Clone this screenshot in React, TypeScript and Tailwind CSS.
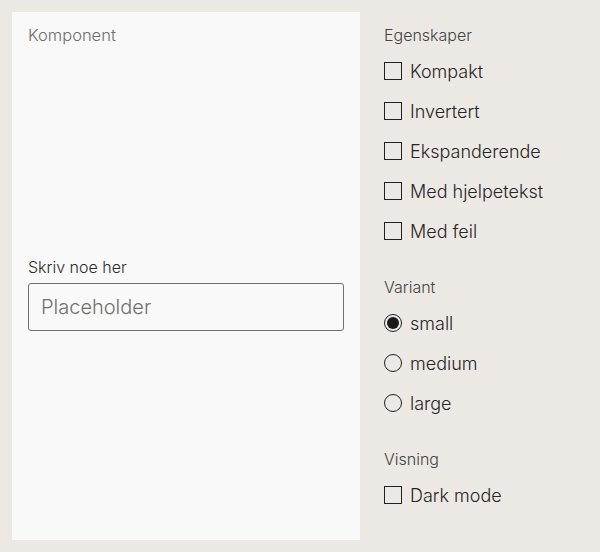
import { useState } from 'react';

const properties = ['Kompakt', 'Invertert', 'Ekspanderende', 'Med hjelpetekst', 'Med feil'];
const variants = ['small', 'medium', 'large'];

function Checkbox({ label }: { label: string }) {
  const [checked, setChecked] = useState(false);
  return (
    <label className="flex items-center h-10 cursor-pointer">
      <span
        onClick={() => setChecked(!checked)}
        className={`w-[18px] h-[18px] border border-[#222] ${checked ? 'bg-[#222]' : 'bg-transparent'}`}
      />
      <span className="ml-2 text-[18px] font-light text-[#262626]">{label}</span>
    </label>
  );
}

function Radio({ label, checked, onSelect }: { label: string; checked: boolean; onSelect: () => void }) {
  return (
    <label className="flex items-center h-10 cursor-pointer" onClick={onSelect}>
      <span className="w-[18px] h-[18px] rounded-full border border-[#222] flex items-center justify-center">
        {checked && <span className="w-3 h-3 rounded-full bg-[#1a1a1a]" />}
      </span>
      <span className="ml-2 text-[18px] font-light text-[#262626]">{label}</span>
    </label>
  );
}

export default function App() {
  const [variant, setVariant] = useState('small');

  return (
    <div className="w-[600px] h-[552px] bg-[#ece8e3] p-3 flex gap-6 font-['Inter',sans-serif]">
      <div className="w-[348px] bg-[#f9f9f9] px-4 pt-3 pb-4 flex flex-col">
        <p className="text-[16.5px] leading-[22px] font-light text-[#6e6e6e]">Komponent</p>
        <div className="flex-1 flex flex-col justify-center pt-[16px]">
          <label className="text-[16px] leading-[22px] font-light text-[#2a2a2a]">Skriv noe her</label>
          <input
            placeholder="Placeholder"
            className="mt-[5px] h-12 w-full rounded-[3px] border border-[#6f6f6f] bg-transparent px-3 text-[20px] font-light text-[#2a2a2a] placeholder:text-[#707070] outline-none"
          />
        </div>
      </div>
      <div className="flex flex-col">
        <p className="text-[16px] leading-[22px] font-light text-[#444] mt-[12px]">Egenskaper</p>
        <div className="mt-[5px] flex flex-col">
          {properties.map((p) => (
            <Checkbox key={p} label={p} />
          ))}
        </div>
        <p className="text-[16px] leading-[22px] font-light text-[#444] mt-[25px]">Variant</p>
        <div className="mt-[5px] flex flex-col">
          {variants.map((v) => (
            <Radio key={v} label={v} checked={variant === v} onSelect={() => setVariant(v)} />
          ))}
        </div>
        <p className="text-[16px] leading-[22px] font-light text-[#444] mt-[25px]">Visning</p>
        <div className="mt-[5px] flex flex-col">
          <Checkbox label="Dark mode" />
        </div>
      </div>
    </div>
  );
}
